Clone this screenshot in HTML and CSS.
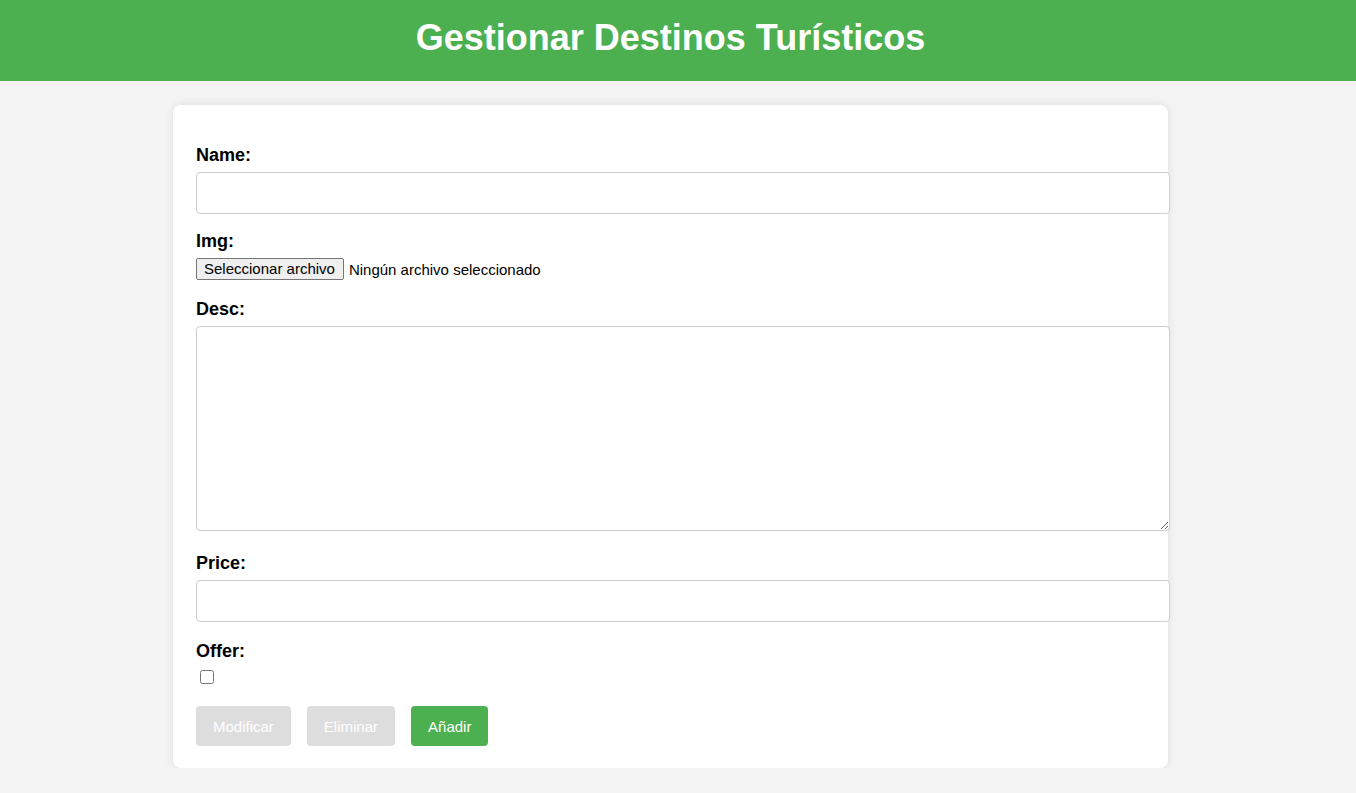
FILE: index.html
```html
<!DOCTYPE html>
<html lang="es">
<head>
<meta charset="utf-8">
<title>Gestionar Destinos Turísticos</title>
<link rel="stylesheet" href="styles.css">
</head>
<body>
<header class="top">
  <h1 class="title">Gestionar Destinos Turísticos</h1>
</header>
<main class="card">
  <form class="form">
    <div class="group">
      <label class="label" for="name">Name:</label>
      <input class="field" id="name" type="text">
    </div>
    <div class="group group-file">
      <span class="label">Img:</span>
      <div class="file-row">
        <label class="file-btn" for="img">Seleccionar archivo</label>
        <span class="file-name">Ningún archivo seleccionado</span>
        <input class="file-hidden" id="img" type="file">
      </div>
    </div>
    <div class="group group-area">
      <label class="label" for="desc">Desc:</label>
      <textarea class="field area" id="desc"></textarea>
    </div>
    <div class="group group-price">
      <label class="label" for="price">Price:</label>
      <input class="field" id="price" type="text">
    </div>
    <div class="group group-check">
      <label class="label" for="offer">Offer:</label>
      <input class="check" id="offer" type="checkbox">
    </div>
    <div class="actions">
      <button class="btn btn-off" type="button" disabled>Modificar</button>
      <button class="btn btn-off" type="button" disabled>Eliminar</button>
      <button class="btn btn-on" type="button">Añadir</button>
    </div>
  </form>
</main>
</body>
</html>
```

FILE: styles.css
```css
html, body {
  margin: 0;
  padding: 0;
}
body {
  background: #f4f4f4;
  font-family: "Liberation Sans", Arial, sans-serif;
  color: #000;
}
.top {
  background: #4caf50;
  height: 81px;
  box-sizing: border-box;
  padding: 17px 15px 0 0;
  display: flex;
  justify-content: center;
  align-items: flex-start;
}
.title {
  margin: 0;
  color: #fff;
  font-size: 36px;
  font-weight: bold;
  line-height: 41px;
}
.card {
  width: 995px;
  box-sizing: border-box;
  margin: 24px 0 0 173px;
  background: #fff;
  border-radius: 8px;
  box-shadow: 0 0 10px rgba(0, 0, 0, 0.1);
  padding: 39px 24px 22px 23px;
}
.form {
  margin: 0;
}
.group {
  margin-bottom: 16px;
}
.group-file {
  margin-bottom: 18px;
}
.group-area {
  margin-bottom: 21px;
}
.group-price {
  margin-bottom: 18px;
}
.group-check {
  margin-bottom: 22px;
}
.label {
  display: block;
  font-weight: bold;
  font-size: 18px;
  line-height: 21px;
  padding-top: 1px;
  margin-bottom: 6px;
}
.field {
  display: block;
  width: 100%;
  height: 16px;
  padding: 12px;
  border: 1px solid #ccc;
  border-radius: 4px;
  font-family: "Liberation Sans", Arial, sans-serif;
  font-size: 14px;
  margin: 0;
  background: #fff;
}
.area {
  height: 179px;
  resize: vertical;
}
.file-row {
  display: flex;
  align-items: center;
  margin-top: 1px;
  height: 22px;
}
.file-btn {
  box-sizing: border-box;
  height: 22px;
  line-height: 20px;
  padding: 0 8px 0 7px;
  border: 1px solid #767676;
  border-radius: 2px;
  background: #efefef;
  font-size: 15px;
  color: #000;
  white-space: nowrap;
}
.file-name {
  margin-left: 5px;
  font-size: 15px;
  color: #000;
}
.file-hidden {
  display: none;
}
.check {
  display: block;
  margin: 8px 3px 3px 4px;
  width: 14px;
  height: 14px;
}
.actions {
  display: flex;
  gap: 16px;
}
.btn {
  height: 40px;
  padding: 0 17px;
  border: none;
  border-radius: 4px;
  font-family: "Liberation Sans", Arial, sans-serif;
  font-size: 15px;
  color: #fff;
}
.btn-off {
  background: #dddddd;
}
.btn-on {
  background: #4caf50;
}
```
